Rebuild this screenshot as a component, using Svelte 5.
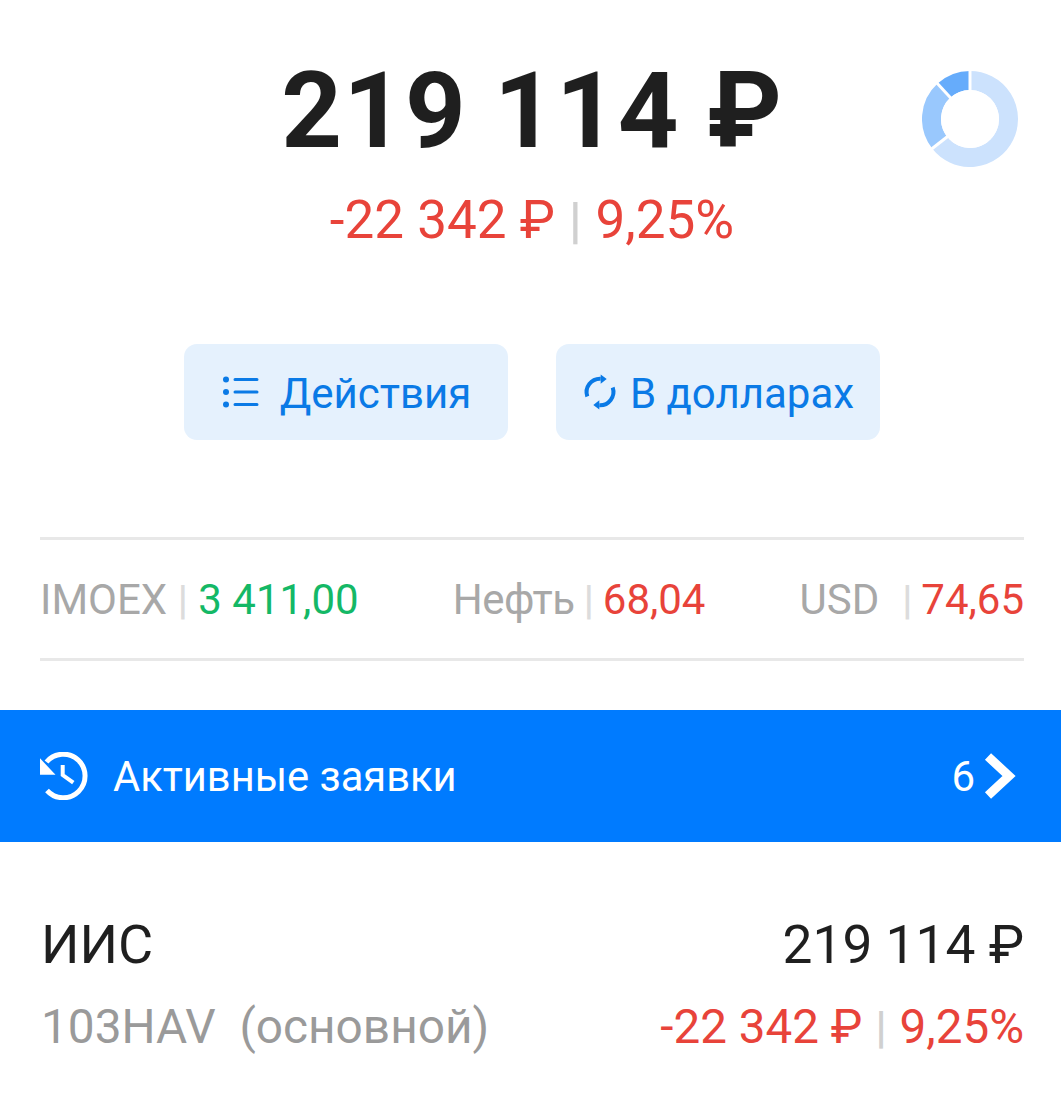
<script>
  const cx = 48, cy = 48, r = 38.5;
  function arc(a0, a1) {
    const p = (a) => {
      const t = ((a - 90) * Math.PI) / 180;
      return `${(cx + r * Math.cos(t)).toFixed(2)} ${(cy + r * Math.sin(t)).toFixed(2)}`;
    };
    return `M${p(a0)}A${r} ${r} 0 ${a1 - a0 > 180 ? 1 : 0} 1 ${p(a1)}`;
  }
  function spoke(a) {
    const t = ((a - 90) * Math.PI) / 180;
    return `M${cx} ${cy}L${(cx + 52 * Math.cos(t)).toFixed(2)} ${(cy + 52 * Math.sin(t)).toFixed(2)}`;
  }
</script>

<main class="page">
  <header class="summary">
    <h1 class="total">219 114 ₽</h1>
    <p class="change"><span>-22 342 ₽</span><i class="sep">|</i><span>9,25%</span></p>
    <svg class="donut" width="96" height="96" viewBox="0 0 96 96" aria-hidden="true">
      <path d={arc(0, 232)} stroke="#cce2fd" />
      <path d={arc(232, 317.5)} stroke="#99c8fd" />
      <path d={arc(317.5, 360)} stroke="#66acfb" />
      <path class="gap" d={spoke(0)} />
      <path class="gap" d={spoke(232)} />
      <path class="gap" d={spoke(317.5)} />
      <circle class="hole" cx="48" cy="48" r="29" />
    </svg>
  </header>

  <div class="actions">
    <button class="action">
      <svg class="list" width="40" height="40" viewBox="0 0 40 40" aria-hidden="true">
        <circle cx="5" cy="7.500" r="3" /><circle cx="5" cy="20" r="3" /><circle cx="5" cy="32.500" r="3" />
        <path d="M14 7.500h22M14 20h22M14 32.500h22" />
      </svg>
      <span class="label first">Действия</span>
    </button>
    <button class="action">
      <svg class="cycle" width="36" height="36" viewBox="0 0 36 36" aria-hidden="true">
        <path class="s" d="M5.300 22.500A13.500 13.500 0 0 1 18.700 4.700" />
        <path class="f" d="M18.700 .5l6 4.500-6 4.800z" />
        <path class="s" d="M30.700 13.500A13.500 13.500 0 0 1 17.300 31.300" />
        <path class="f" d="M17.300 35.500l-6-4.500 6-4.800z" />
      </svg>
      <span class="label">В долларах</span>
    </button>
  </div>

  <section class="ticker">
    <div class="tick"><span class="name">IMOEX</span><i class="sep first-sep">|</i><span class="up">3 411,00</span></div>
    <div class="tick"><span class="name neft">Нефть</span><i class="sep">|</i><span class="down">68,04</span></div>
    <div class="tick"><span class="name">USD</span><i class="sep wide">|</i><span class="down">74,65</span></div>
  </section>

  <div class="orders">
    <svg class="history" width="48" height="48" viewBox="0 0 48 48" aria-hidden="true">
      <path class="s" d="M6.500 10A21.800 21.800 0 1 1 7 38.500" />
      <path class="f" d="M0 6.300V22.800H15.500z" />
      <path class="h" d="M22.700 13V23L33.300 30.700" />
    </svg>
    <span class="orders-label">Активные заявки</span>
    <span class="count">6</span>
    <svg class="chev" width="34" height="44" viewBox="0 0 34 44" aria-hidden="true"><path d="M5 2.500L26 22 5 41.500" /></svg>
  </div>

  <section class="account">
    <div class="line">
      <span class="acc-name">ИИС</span>
      <span class="acc-total">219 114 ₽</span>
    </div>
    <div class="line second">
      <span class="acc-id">103HAV&nbsp; (основной)</span>
      <span class="down"><span>-22 342 ₽</span><i class="sep">|</i><span>9,25%</span></span>
    </div>
  </section>
</main>

<style>
  :global(body) { margin: 0; background: #fff; }
  .page {
    width: 1061px;
    height: 1105px;
    overflow: hidden;
    font-family: Roboto, "Noto Sans", sans-serif;
    color: #1f1f1f;
  }
  i { font-style: normal; }
  .summary {
    position: relative;
    height: 344px;
    padding: 50px 0 0 3px;
    box-sizing: border-box;
    text-align: center;
  }
  .total {
    margin: 0;
    font-size: 106px;
    line-height: 122px;
    font-weight: 700;
    letter-spacing: 1px;
  }
  .change {
    margin: 18px 0 0;
    font-size: 53px;
    line-height: 60px;
    color: #e8433a;
  }
  .change .sep { color: #d0d0d0; margin: 0 14px; font-size: 50px; }
  .donut { position: absolute; left: 922px; top: 71px; fill: none; stroke-width: 19; }
  .donut .gap { stroke: #fff; stroke-width: 3; }
  .donut .hole { fill: #fff; stroke: none; }
  .actions { display: flex; justify-content: center; gap: 48px; padding-left: 3px; }
  .action {
    width: 324px;
    height: 96px;
    display: flex;
    align-items: center;
    justify-content: center;
    border: 0;
    border-radius: 13px;
    background: #e5f1fd;
    color: #0a7ae6;
    font: inherit;
    padding: 0;
  }
  .label { font-size: 42px; position: relative; top: 1px; }
  .label.first { margin-left: 19px; }
  .list circle { fill: #0a7ae6; }
  .list path { stroke: #0a7ae6; stroke-width: 3; fill: none; stroke-linecap: round; }
  .cycle { margin-right: 12px; }
  .cycle .s { fill: none; stroke: #0a7ae6; stroke-width: 4; }
  .cycle .f { fill: #0a7ae6; }
  .ticker {
    display: flex;
    justify-content: space-between;
    align-items: center;
    margin: 97px 37px 0 40px;
    height: 124px;
    border-top: 3px solid #e8e8e8;
    border-bottom: 3px solid #e8e8e8;
    box-sizing: border-box;
    font-size: 42px;
    white-space: nowrap;
  }
  .name { color: #a8a8a8; }
  .neft { letter-spacing: -0.4px; }
  .up { color: #14b866; }
  .down { color: #e8433a; }
  .sep { color: #dcdcdc; margin: 0 9px; font-size: 40px; font-weight: 700; }
  .sep.first-sep { margin: 0 10.5px; }
  .sep.wide { margin: 0 9px 0 23px; }
  .orders {
    margin-top: 49px;
    height: 132px;
    background: #007bff;
    color: #fff;
    display: flex;
    align-items: center;
    padding: 0 44px 0 40px;
  }
  .history .s { fill: none; stroke: #fff; stroke-width: 5; }
  .history .f { fill: #fff; }
  .history .h { fill: none; stroke: #fff; stroke-width: 4; }
  .orders-label { font-size: 41.7px; margin-left: 25px; flex: 1; }
  .count { font-size: 42px; margin-right: 8px; }
  .chev { overflow: visible; }
  .chev path { fill: none; stroke: #fff; stroke-width: 9; }
  .account { padding: 74px 37px 0 41px; }
  .line { display: flex; justify-content: space-between; align-items: baseline; }
  .second { margin-top: 24px; }
  .acc-name { font-size: 54px; line-height: 58px; }
  .acc-total { font-size: 53.3px; line-height: 58px; }
  .acc-id { color: #9a9a9a; font-size: 47.8px; line-height: 58px; }
  .second .down { font-size: 47.6px; line-height: 58px; }
  .second .sep { margin: 0 13px; font-size: 44px; color: #d0d0d0; }
</style>
